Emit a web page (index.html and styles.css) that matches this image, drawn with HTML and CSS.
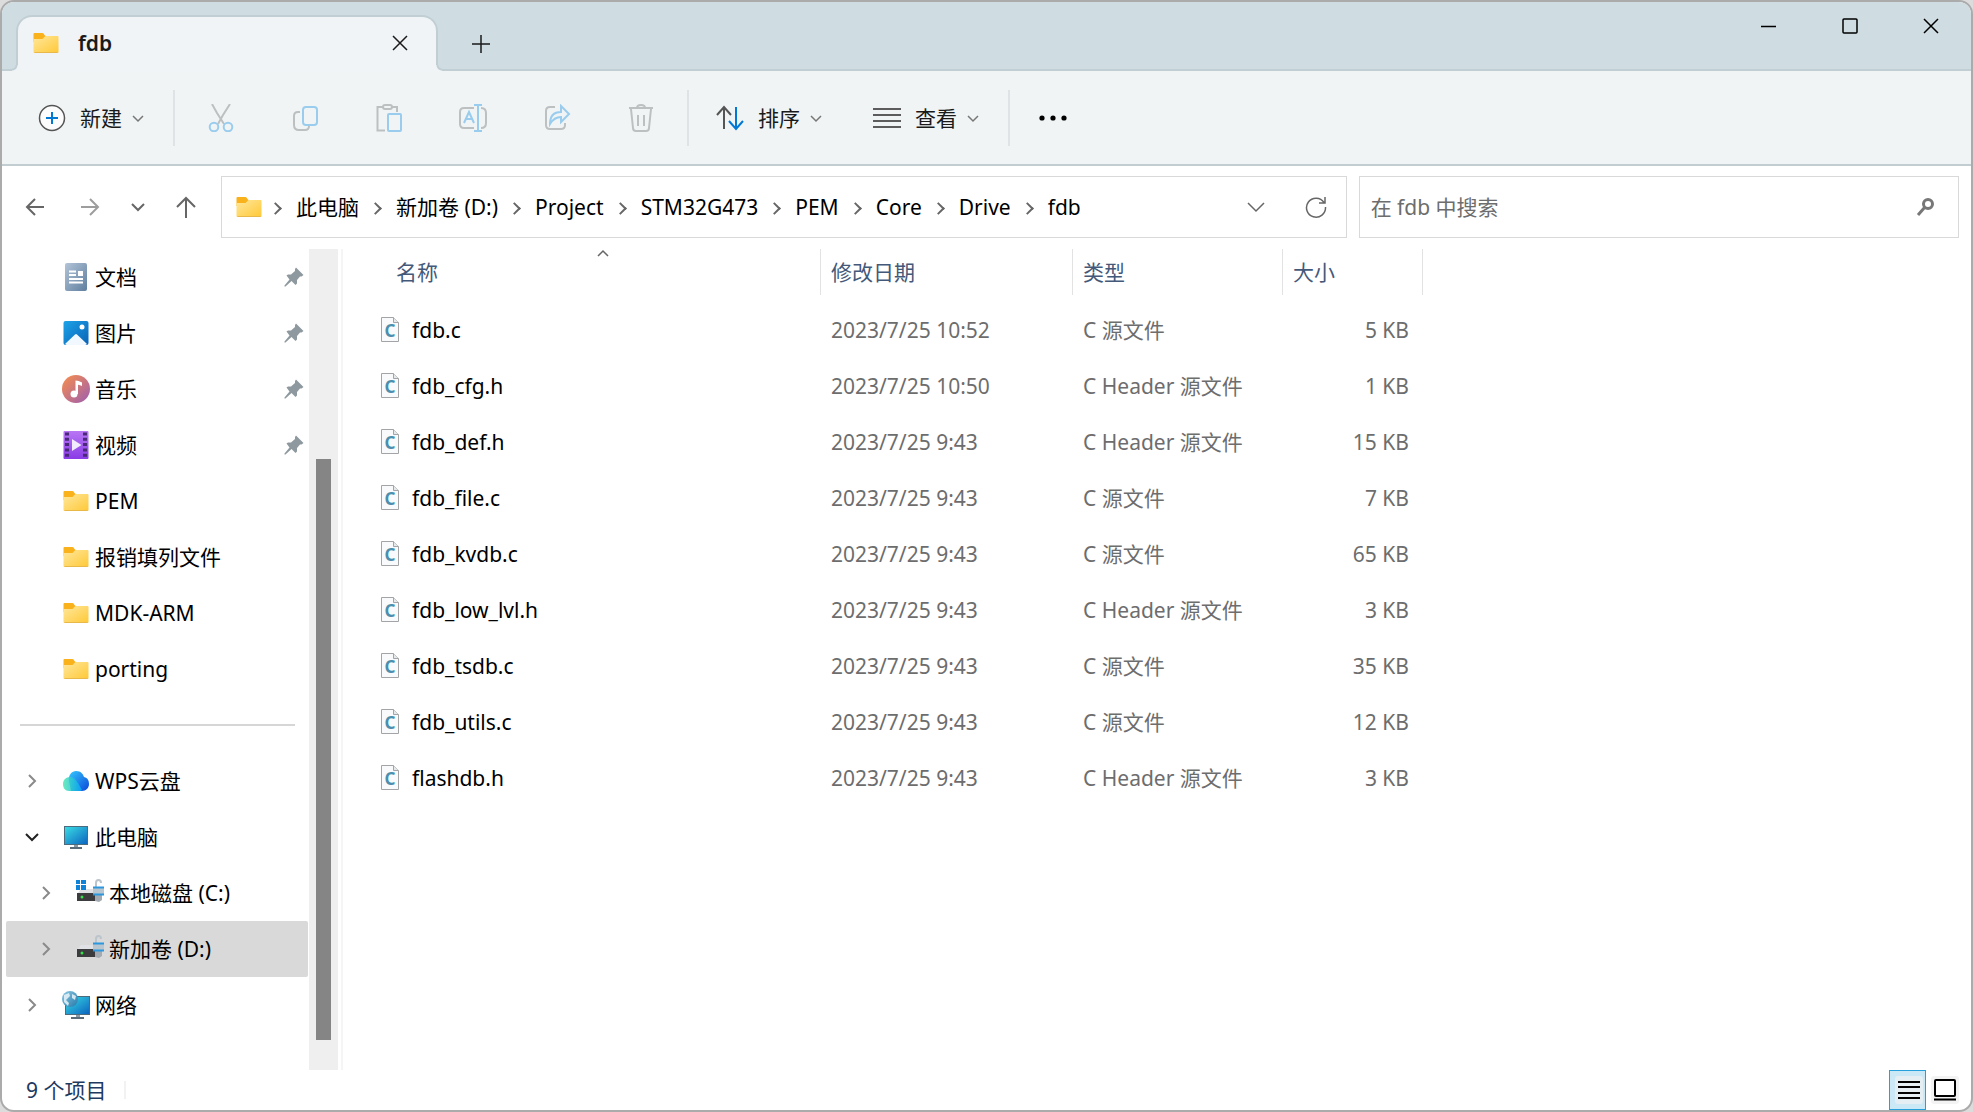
FILE: index.html
```html
<!DOCTYPE html>
<html lang="zh-CN">
<head>
    <meta charset="UTF-8">
    <meta name="viewport" content="width=device-width, initial-scale=1.0">
    <title>fdb</title>
    <link rel="stylesheet" href="styles.css">
</head>
<body>
    <svg class="sprite" aria-hidden="true">
        <defs>
            <linearGradient id="g-folder" x1="0" y1="0" x2="1" y2="1"><stop offset="0" stop-color="#ffe79c"/><stop offset="1" stop-color="#ffc937"/></linearGradient>
            <linearGradient id="g-doc" x1="0" y1="0" x2="1" y2="1"><stop offset="0" stop-color="#b2c4d8"/><stop offset="1" stop-color="#5f7f9f"/></linearGradient>
            <linearGradient id="g-pic" x1="0" y1="0" x2="1" y2="1"><stop offset="0" stop-color="#1da3e8"/><stop offset="1" stop-color="#0a62b5"/></linearGradient>
            <linearGradient id="g-music" x1="0" y1="0" x2="1" y2="1"><stop offset="0.1" stop-color="#f08a55"/><stop offset="0.9" stop-color="#a562a8"/></linearGradient>
            <linearGradient id="g-video" x1="0" y1="0" x2="0" y2="1"><stop offset="0" stop-color="#b877f4"/><stop offset="1" stop-color="#8a3be6"/></linearGradient>
            <linearGradient id="g-cloud" x1="0" y1="0" x2="1" y2="1"><stop offset="0" stop-color="#35c8ff"/><stop offset="1" stop-color="#0a46d8"/></linearGradient>
            <linearGradient id="g-cloud2" x1="0" y1="0" x2="1" y2="0"><stop offset="0" stop-color="#4fe8b0"/><stop offset="1" stop-color="#08a8fa"/></linearGradient>
            <linearGradient id="g-screen" x1="0" y1="0" x2="1" y2="1"><stop offset="0" stop-color="#39dbe4"/><stop offset="1" stop-color="#0c66c0"/></linearGradient>
            <linearGradient id="g-globe" x1="0" y1="0" x2="1" y2="1"><stop offset="0" stop-color="#8fcbe4"/><stop offset="1" stop-color="#2478aa"/></linearGradient>
        </defs>
        <symbol id="folder" viewBox="0 0 28 28">
            <path d="M1.500 5a1 1 0 0 1 1-1h8q1 0 2 2l1 1h12v6h-24z" fill="#f9b21b"/>
            <path d="M1.500 10h9l3-3h12q1 0 1 1v15q0 1-1 1h-23q-1 0-1-1z" fill="url(#g-folder)"/>
            <path d="M2.500 23.500h23" stroke="#e8b84b"/>
        </symbol>
        <symbol id="document" viewBox="0 0 28 28">
            <rect x="3" y="0" width="22" height="28" rx="2" fill="url(#g-doc)"/>
            <path d="M7 8.500h7M7 12h7M7 16h14M7 19.500h14" stroke="#fff" stroke-width="2"/>
            <path d="M16 8h5v5h-5z" fill="#fff"/>
        </symbol>
        <symbol id="picture" viewBox="0 0 28 28">
            <rect x="1.500" y="2" width="25" height="24" rx="2" fill="url(#g-pic)"/>
            <path d="M3 25L13 15.500q1-1 2 0L25 25q-1 1-2 1H5q-1 0-2-1z" fill="#f2f8ff"/>
            <circle cx="20" cy="8" r="2.500" fill="#fff"/>
        </symbol>
        <symbol id="music" viewBox="0 0 28 28">
            <circle cx="14" cy="14" r="14" fill="url(#g-music)"/>
            <circle cx="12" cy="19" r="3.500" fill="#fff"/>
            <path d="M13.500 5.500q3 0 6.500 2v3.500q-2-1-4-1.200V19h-2.500z" fill="#fff"/>
        </symbol>
        <symbol id="video" viewBox="0 0 28 28">
            <rect x="1.500" y="0" width="25" height="28" rx="1" fill="url(#g-video)"/>
            <path d="M5 1.500v26M23 1.500v26" stroke="#4a2a78" stroke-width="4" stroke-dasharray="3 2.300"/>
            <path d="M10 8l9.500 6-9.500 6z" fill="#f2eafd"/>
        </symbol>
        <symbol id="cloud" viewBox="0 0 28 28">
            <path d="M7 14C6 8 10 4 14 4c5 0 7 3 8 6 4 1 5 4 5 7 0 4-3 7-7 7H9z" fill="url(#g-cloud)"/>
            <path d="M7 24c-4 0-6-3-6-7s3-7 7-7c5 0 6 4 8 6l4 7q-1 1-2 1z" fill="url(#g-cloud2)" opacity="0.850"/>
        </symbol>
        <symbol id="computer" viewBox="0 0 28 28">
            <path d="M12 21h4v4h-4z" fill="#8d9aa5"/>
            <rect x="8" y="24" width="12" height="2" fill="#5c6b78"/>
            <rect x="2" y="3" width="24" height="19" fill="#4c6b7d"/>
            <rect x="3" y="4" width="22" height="17" fill="url(#g-screen)"/>
        </symbol>
        <symbol id="disk" viewBox="0 0 28 28">
            <path d="M5 10h17l4 5H1z" fill="#dfe1e4"/>
            <path d="M1 14h20v8H1z" fill="#3c3c3e"/>
            <circle cx="6" cy="18" r="1.500" fill="#35e04a"/>
            <path d="M20 9V4q0-3 2.500-3T25 4" fill="none" stroke="#bcc4cc" stroke-width="2"/>
            <path d="M19 16h7v5l-3 2-4-1z" fill="#a4aab2"/>
            <rect x="17" y="8" width="11" height="8" fill="#b9c6d0"/>
            <path d="M17 8.500h11M17 15.500h11" stroke="#2d97dd" stroke-width="2"/>
        </symbol>
        <symbol id="disk-win" viewBox="0 0 28 28">
            <use href="#disk"/>
            <path d="M0 1h10v10H0z" fill="#fff"/>
            <path d="M0 1h4v4H0zM5 1h5v4H5zM0 6h4v5H0zM5 6h5v5H5z" fill="#0f83d8"/>
        </symbol>
        <symbol id="network" viewBox="0 0 28 28">
            <path d="M14 23h4v4h-4z" fill="#8d9aa5"/>
            <rect x="9" y="26" width="13" height="2" fill="#5c6b78"/>
            <rect x="3" y="5" width="25" height="19" fill="#4c6b7d"/>
            <rect x="4" y="6" width="23" height="17" fill="url(#g-screen)"/>
            <circle cx="8" cy="8" r="8" fill="url(#g-globe)"/>
            <path d="M2 4l5-2 1 3-4 4 3 3-1 3-4-4zM10 3l4 2-1 4-3-2z" fill="#eaf4f9" opacity="0.850"/>
        </symbol>
        <symbol id="pin" viewBox="0 0 20 20">
            <path d="M12 0.500l7.500 7.500-2 1.500-1.500 0-3 3.500 0 3.500-1.500 1.500-4-4L1.500 19.500H0.500v-1L5.500 12.500 2.500 8.500 4 7.500l3 0 4-3.500 0-2z" fill="#8e999f"/>
        </symbol>
        <symbol id="page" viewBox="0 0 18 25">
            <path d="M0.500 0.500h12l5 5v19H0.500z" fill="#f8fafb" stroke="#a2a4a6"/>
            <path d="M12.500 0.500v5h5" fill="#e6e9eb" stroke="#a2a4a6"/>
        </symbol>
        <symbol id="chev-down" viewBox="0 0 14 14"><path d="M2 5l5 5 5-5"/></symbol>
        <symbol id="chev-right" viewBox="0 0 14 14"><path d="M4 1l6 6-6 6"/></symbol>
    </svg>

    <div class="window">
        <header class="title-bar">
            <div class="tab">
                <svg class="icon"><use href="#folder"/></svg>
                <span class="tab-title">fdb</span>
                <button class="tab-close" aria-label="关闭选项卡"><svg class="line" width="16" height="16"><path d="M1 1l14 14M15 1L1 15"/></svg></button>
            </div>
            <button class="tab-add" aria-label="新建选项卡"><svg class="line" width="18" height="18"><path d="M9 0v18M0 9h18"/></svg></button>
            <div class="window-controls">
                <button aria-label="最小化"><svg class="line" width="16" height="16"><path d="M0 8.500h15"/></svg></button>
                <button aria-label="最大化"><svg class="line" width="16" height="16"><rect x="1" y="1" width="14" height="14" rx="1"/></svg></button>
                <button aria-label="关闭"><svg class="line" width="16" height="16"><path d="M1 1l14 14M15 1L1 15"/></svg></button>
            </div>
        </header>

        <div class="toolbar">
            <button class="command new">
                <svg width="28" height="28"><circle cx="14" cy="14" r="12.500" fill="#fcfcfc" stroke="#555" stroke-width="1.500"/><path d="M14 8v12M8 14h12" stroke="#0078d4" stroke-width="2"/></svg>
                <span>新建</span>
                <svg class="chevron"><use href="#chev-down"/></svg>
            </button>
            <div class="group">
                <button class="tool" aria-label="剪切" disabled><svg width="28" height="28"><path class="gray" d="M5 0l5 9 7 11M23 0l-7 11-5 9"/><circle class="blue" cx="7" cy="23" r="4.300"/><circle class="blue" cx="21" cy="23" r="4.300"/></svg></button>
                <button class="tool" aria-label="复制" disabled><svg width="28" height="28"><path class="gray" d="M9 8H7q-4 0-4 4v9q0 5 5 5h6q4 0 4-4"/><rect class="blue" x="12" y="3" width="14" height="18" rx="3"/></svg></button>
                <button class="tool" aria-label="粘贴" disabled><svg width="28" height="28"><path class="gray" d="M9 3H2.500v23.500H10M17 3h5v5"/><rect class="gray" x="8" y="1" width="9" height="4" rx="2"/><rect class="blue" x="13" y="10" width="13" height="17" rx="1"/></svg></button>
                <button class="tool" aria-label="重命名" disabled><svg width="28" height="28"><path class="gray" d="M15 4H5Q1 4 1 8v12q0 4 4 4h10M22 4q5 0 5 5v10q0 5-5 5"/><path class="blue" d="M5 19L10 8l5 11M7 15h6M19 1v26M15 1h8M15 27h8"/></svg></button>
                <button class="tool" aria-label="共享" disabled><svg width="28" height="28"><path class="gray" d="M12 3H7Q3 3 3 7v14q0 4 4 4h11q4 0 4-4v-2"/><path class="blue" d="M7 20c0-8 4-12 11-12V2l8 8-8 8v-5c-5 0-8 2-11 7z"/></svg></button>
                <button class="tool" aria-label="删除" disabled><svg width="28" height="28"><path class="gray" d="M2 4h24M10 4q0-3 4-3t4 3M4 5l2 19q0 3 3 3h10q3 0 3-3l2-19M11 11v11M17 11v11"/></svg></button>
            </div>
            <div class="group wide">
                <button class="command">
                    <svg width="28" height="28"><path d="M8 25V4M1 11l7-8 7 8" fill="none" stroke="#555" stroke-width="2"/><path d="M20 3v21M13 17l7 8 7-8" fill="none" stroke="#0078d4" stroke-width="2"/></svg>
                    <span>排序</span>
                    <svg class="chevron"><use href="#chev-down"/></svg>
                </button>
                <button class="command">
                    <svg width="28" height="28"><path d="M0 5h28M0 11h28M0 17h28M0 23h28" stroke="#5c5c5c" stroke-width="2"/></svg>
                    <span>查看</span>
                    <svg class="chevron"><use href="#chev-down"/></svg>
                </button>
            </div>
            <button class="more" aria-label="查看更多"><svg width="28" height="28"><circle cx="3" cy="14" r="2.600"/><circle cx="14" cy="14" r="2.600"/><circle cx="25" cy="14" r="2.600"/></svg></button>
        </div>

        <div class="nav-row">
            <div class="nav-buttons">
                <button aria-label="后退"><svg class="line heavy" width="20" height="20"><path d="M19 10H2M10 2l-8 8 8 8"/></svg></button>
                <button aria-label="前进" disabled><svg class="line heavy" width="20" height="20"><path d="M1 10h17M10 2l8 8-8 8"/></svg></button>
                <button aria-label="最近浏览的位置" class="small"><svg class="line heavy" width="14" height="14"><path d="M1 4l6 6 6-6"/></svg></button>
                <button aria-label="上移"><svg class="line heavy" width="22" height="22"><path d="M11 22V2M2 11l9-9 9 9"/></svg></button>
            </div>
            <div class="address">
                <svg class="icon"><use href="#folder"/></svg>
                <ol class="crumbs">
                    <li><a href="#">此电脑</a></li>
                    <li><a href="#">新加卷 (D:)</a></li>
                    <li><a href="#">Project</a></li>
                    <li><a href="#">STM32G473</a></li>
                    <li><a href="#">PEM</a></li>
                    <li><a href="#">Core</a></li>
                    <li><a href="#">Drive</a></li>
                    <li><a href="#">fdb</a></li>
                </ol>
                <button aria-label="以前的位置"><svg class="line" width="20" height="20"><path d="M2 6l8 8 8-8"/></svg></button>
                <button aria-label="刷新"><svg class="line" width="22" height="22"><path d="M19 6.500A9.500 9.500 0 1 0 20.500 11M20 1v6h-6"/></svg></button>
            </div>
            <form class="search">
                <input type="text" placeholder="在 fdb 中搜索" aria-label="搜索">
                <button type="button" aria-label="开始搜索"><svg width="20" height="20"><circle cx="12" cy="7" r="4.500" fill="none" stroke="#777" stroke-width="3"/><path d="M9 10l-7 8" stroke="#777" stroke-width="3"/></svg></button>
            </form>
        </div>

        <div class="content">
            <nav class="sidebar">
                <ul class="tree">
                    <li><a href="#"><span class="expand"></span><svg class="icon"><use href="#document"/></svg>文档<svg class="pin"><use href="#pin"/></svg></a></li>
                    <li><a href="#"><span class="expand"></span><svg class="icon"><use href="#picture"/></svg>图片<svg class="pin"><use href="#pin"/></svg></a></li>
                    <li><a href="#"><span class="expand"></span><svg class="icon"><use href="#music"/></svg>音乐<svg class="pin"><use href="#pin"/></svg></a></li>
                    <li><a href="#"><span class="expand"></span><svg class="icon"><use href="#video"/></svg>视频<svg class="pin"><use href="#pin"/></svg></a></li>
                    <li><a href="#"><span class="expand"></span><svg class="icon"><use href="#folder"/></svg>PEM</a></li>
                    <li><a href="#"><span class="expand"></span><svg class="icon"><use href="#folder"/></svg>报销填列文件</a></li>
                    <li><a href="#"><span class="expand"></span><svg class="icon"><use href="#folder"/></svg>MDK-ARM</a></li>
                    <li><a href="#"><span class="expand"></span><svg class="icon"><use href="#folder"/></svg>porting</a></li>
                    <li class="divider"></li>
                    <li><a href="#"><svg class="expand"><use href="#chev-right"/></svg><svg class="icon"><use href="#cloud"/></svg>WPS云盘</a></li>
                    <li><a href="#"><svg class="expand open"><path d="M1 4l6 6 6-6"/></svg><svg class="icon"><use href="#computer"/></svg>此电脑</a></li>
                    <li><a href="#" class="child"><svg class="expand"><use href="#chev-right"/></svg><svg class="icon"><use href="#disk-win"/></svg>本地磁盘 (C:)</a></li>
                    <li><a href="#" class="child selected"><svg class="expand"><use href="#chev-right"/></svg><svg class="icon"><use href="#disk"/></svg>新加卷 (D:)</a></li>
                    <li><a href="#"><svg class="expand"><use href="#chev-right"/></svg><svg class="icon"><use href="#network"/></svg>网络</a></li>
                </ul>
                <div class="scrollbar"><div class="thumb"></div></div>
            </nav>

            <main class="files">
                <table>
                    <colgroup><col class="col-name"><col class="col-date"><col class="col-type"><col class="col-size"></colgroup>
                    <thead>
                        <tr>
                            <th class="name" aria-sort="ascending">名称<svg class="sort line" width="12" height="8"><path d="M1 7l5-5 5 5"/></svg></th>
                            <th>修改日期</th>
                            <th>类型</th>
                            <th>大小</th>
                        </tr>
                    </thead>
                    <tbody>
                        <tr><td><svg class="file-icon"><use href="#page"/><text x="9" y="20">C</text></svg>fdb.c</td><td>2023/7/25 10:52</td><td>C 源文件</td><td>5 KB</td></tr>
                        <tr><td><svg class="file-icon"><use href="#page"/><text x="9" y="20">C</text></svg>fdb_cfg.h</td><td>2023/7/25 10:50</td><td>C Header 源文件</td><td>1 KB</td></tr>
                        <tr><td><svg class="file-icon"><use href="#page"/><text x="9" y="20">C</text></svg>fdb_def.h</td><td>2023/7/25 9:43</td><td>C Header 源文件</td><td>15 KB</td></tr>
                        <tr><td><svg class="file-icon"><use href="#page"/><text x="9" y="20">C</text></svg>fdb_file.c</td><td>2023/7/25 9:43</td><td>C 源文件</td><td>7 KB</td></tr>
                        <tr><td><svg class="file-icon"><use href="#page"/><text x="9" y="20">C</text></svg>fdb_kvdb.c</td><td>2023/7/25 9:43</td><td>C 源文件</td><td>65 KB</td></tr>
                        <tr><td><svg class="file-icon"><use href="#page"/><text x="9" y="20">C</text></svg>fdb_low_lvl.h</td><td>2023/7/25 9:43</td><td>C Header 源文件</td><td>3 KB</td></tr>
                        <tr><td><svg class="file-icon"><use href="#page"/><text x="9" y="20">C</text></svg>fdb_tsdb.c</td><td>2023/7/25 9:43</td><td>C 源文件</td><td>35 KB</td></tr>
                        <tr><td><svg class="file-icon"><use href="#page"/><text x="9" y="20">C</text></svg>fdb_utils.c</td><td>2023/7/25 9:43</td><td>C 源文件</td><td>12 KB</td></tr>
                        <tr><td><svg class="file-icon"><use href="#page"/><text x="9" y="20">C</text></svg>flashdb.h</td><td>2023/7/25 9:43</td><td>C Header 源文件</td><td>3 KB</td></tr>
                    </tbody>
                </table>
            </main>
        </div>

        <footer class="status-bar">
            <span class="count">9 个项目</span>
            <div class="views">
                <button class="active" aria-label="详细信息"><svg width="28" height="28"><rect width="28" height="28" rx="3" fill="#e4eef3"/><path d="M3 6h22M3 11h22M3 17h22M3 22h22" stroke="#000" stroke-width="2"/></svg></button>
                <button aria-label="大图标"><svg width="28" height="28"><rect width="28" height="28" rx="3" fill="#f3f3f3"/><rect x="4" y="4" width="20" height="16" rx="1" fill="#fff" stroke="#000" stroke-width="2"/><path d="M3 23.500h22" stroke="#000" stroke-width="2"/></svg></button>
            </div>
        </footer>
    </div>
</body>
</html>
```

FILE: styles.css
```css
* {
    box-sizing: border-box;
}

body {
    margin: 0;
    background: #dcdcdc;
    color: #000;
    font-family: "Noto Sans", "Noto Sans CJK SC", sans-serif;
    font-size: 21px;
    line-height: 28px;
}

button {
    display: flex;
    align-items: center;
    justify-content: center;
    padding: 0;
    border: none;
    background: none;
    color: #1a1a1a;
    font: inherit;
}

a {
    color: inherit;
    text-decoration: none;
}

ul, ol {
    margin: 0;
    padding: 0;
    list-style: none;
}

svg {
    flex: none;
}

.sprite {
    position: absolute;
    width: 0;
    height: 0;
}

.icon {
    width: 28px;
    height: 28px;
}

.line {
    fill: none;
    stroke: currentColor;
    stroke-width: 1.5;
}

.line.heavy {
    stroke-width: 2;
}

.window {
    display: flex;
    flex-direction: column;
    height: 100vh;
    border: 2px solid #ababab;
    border-radius: 14px;
    background: #fff;
    overflow: hidden;
}

/* title bar */

.title-bar {
    display: flex;
    align-items: flex-end;
    height: 69px;
    flex: none;
    border-bottom: 2px solid #c1cfd5;
    background: #cfdde2;
}

.tab {
    position: relative;
    display: flex;
    align-items: center;
    width: 422px;
    height: 56px;
    margin: 0 0 -2px 14px;
    padding: 0 28px 2px 14px;
    border: 2px solid #c1cfd5;
    border-bottom: none;
    border-radius: 16px 16px 0 0;
    background: #f0f4f6;
}

/* small outward curves at the foot of the tab */
.tab::before,
.tab::after {
    content: "";
    position: absolute;
    bottom: 0;
    width: 6px;
    height: 6px;
}

.tab::before {
    left: -6px;
    background: radial-gradient(circle at 0 0, #cfdde2 3px, #c1cfd5 4px, #c1cfd5 5px, #f0f4f6 6px);
}

.tab::after {
    right: -6px;
    background: radial-gradient(circle at 100% 0, #cfdde2 3px, #c1cfd5 4px, #c1cfd5 5px, #f0f4f6 6px);
}

.tab-title {
    margin-left: 18px;
    font-weight: 600;
    color: #1a1a1a;
}

.tab-close {
    margin-left: auto;
}

.tab-add {
    width: 48px;
    height: 50px;
    margin-left: 19px;
}

.window-controls {
    display: flex;
    align-self: flex-start;
    margin-left: auto;
}

.window-controls button {
    width: 81px;
    height: 48px;
    color: #000;
}

/* toolbar */

.toolbar {
    display: flex;
    align-items: center;
    flex: none;
    height: 95px;
    padding-left: 36px;
    border-bottom: 2px solid #c1cdd0;
    background: #f0f4f5;
}

.command {
    gap: 14px;
}

.command.new {
    margin-right: 28px;
}

.command .chevron {
    width: 14px;
    height: 14px;
    margin-left: -5px;
    fill: none;
    stroke: #777;
    stroke-width: 1.5;
}

.group {
    display: flex;
    align-items: center;
    gap: 56px;
    height: 56px;
    padding: 0 32px;
    border-left: 2px solid #e0e3e5;
}

.group.wide {
    gap: 50px;
    padding: 0 28px 0 27px;
    border-right: 2px solid #e0e3e5;
}

.tool svg {
    fill: none;
    stroke-width: 2;
}

.tool .gray {
    stroke: #bdc0c1;
}

.tool .blue {
    stroke: #9accee;
    fill: #f0f4f5;
}

.more {
    margin-left: 29px;
}

/* navigation row */

.nav-row {
    display: grid;
    grid-template-columns: auto 15fr 8fr;
    flex: none;
    gap: 12px;
    padding: 10px 12px 11px 0;
}

.nav-buttons {
    display: flex;
    align-items: center;
    gap: 13px;
    padding: 0 2px 0 12px;
}

.nav-buttons button {
    width: 42px;
    height: 42px;
    color: #666;
}

.nav-buttons button:disabled {
    color: #9d9d9d;
}

.nav-buttons button.small {
    width: 28px;
}

.address {
    display: flex;
    align-items: center;
    height: 62px;
    padding: 0 14px 0 13px;
    border: 1px solid #d9d9d9;
}

.address .icon {
    margin-right: -4px;
}

.address button {
    width: 32px;
    height: 32px;
    margin-left: 28px;
    color: #666;
}

.crumbs {
    display: flex;
    flex: 1;
    white-space: nowrap;
}

.crumbs li {
    display: flex;
    align-items: center;
}

.crumbs li::before {
    content: "";
    width: 7px;
    height: 7px;
    margin: 2px 16px 0 12px;
    border: solid #666;
    border-width: 2px 2px 0 0;
    transform: rotate(45deg);
}

.search {
    display: flex;
    align-items: center;
    padding: 0 22px 0 11px;
    border: 1px solid #d9d9d9;
}

.search input {
    flex: 1;
    min-width: 0;
    padding: 0;
    border: none;
    outline: none;
    background: none;
    font: inherit;
}

.search input::placeholder {
    color: #6d6d6d;
    opacity: 1;
}

/* content */

.content {
    display: flex;
    flex: 1;
    min-height: 0;
}

.sidebar {
    display: flex;
    flex: none;
    width: 341px;
    border-right: 2px solid #f5f5f5;
}

.tree {
    flex: 1;
    padding: 0 1px 0 4px;
}

.tree a {
    display: flex;
    align-items: center;
    height: 56px;
    padding: 0 4px 0 19px;
    border-radius: 2px;
}

.tree a.child {
    padding-left: 33px;
}

.tree a.selected {
    background: #d9d9d9;
}

.tree .icon {
    margin: 0 5px 0 23px;
}

.tree .expand {
    width: 14px;
    height: 14px;
    fill: none;
    stroke: #8a8a8a;
    stroke-width: 2;
}

.tree .expand.open {
    stroke: #222;
}

.pin {
    width: 20px;
    height: 20px;
    margin-left: auto;
}

.divider {
    height: 56px;
    padding: 27px 13px 0 14px;
}

.divider::before {
    content: "";
    display: block;
    height: 2px;
    background: #d6d6d6;
}

.scrollbar {
    display: flex;
    width: 29px;
    margin-right: 3px;
    padding: 210px 7px 30px;
    background: #efefef;
}

.thumb {
    flex: 1;
    background: #858585;
}

/* file list */

.files {
    flex: 1;
    overflow: hidden;
}

table {
    table-layout: fixed;
    width: 1080px;
    border-collapse: separate;
    border-spacing: 0;
}

.col-name {
    width: 478px;
}

.col-date {
    width: 252px;
}

.col-type {
    width: 210px;
}

.col-size {
    width: 140px;
}

th {
    height: 46px;
    padding: 0 0 0 10px;
    border-right: 1px solid #e2e2e2;
    color: #44597a;
    font-weight: 400;
    text-align: left;
}

th.name {
    position: relative;
    padding-left: 53px;
}

.sort {
    position: absolute;
    top: 0;
    left: 254px;
    color: #666;
}

tbody::before {
    content: "";
    display: block;
    height: 7px;
}

td {
    height: 56px;
    padding: 0 0 0 10px;
    color: #6d6d6d;
}

td:first-child {
    padding-left: 38px;
    color: #000;
}

td:last-child {
    padding-right: 14px;
    text-align: right;
}

.file-icon {
    width: 18px;
    height: 25px;
    margin-right: 13px;
    vertical-align: -4px;
}

.file-icon text {
    fill: #4a8fae;
    font-size: 17px;
    font-weight: 700;
    text-anchor: middle;
}

/* status bar */

.status-bar {
    display: flex;
    align-items: center;
    justify-content: space-between;
    flex: none;
    height: 40px;
    padding: 0 12px 0 24px;
    color: #1e3a5f;
}

.count {
    padding-right: 18px;
    border-right: 2px solid #f2f2f2;
    line-height: 18px;
}

.views {
    display: flex;
    gap: 5px;
}

.views button {
    height: 40px;
}

.views button.active {
    width: 37px;
    padding-left: 3px;
    border: 1px solid #26a0da;
    background: #cbe8f6;
}
```
